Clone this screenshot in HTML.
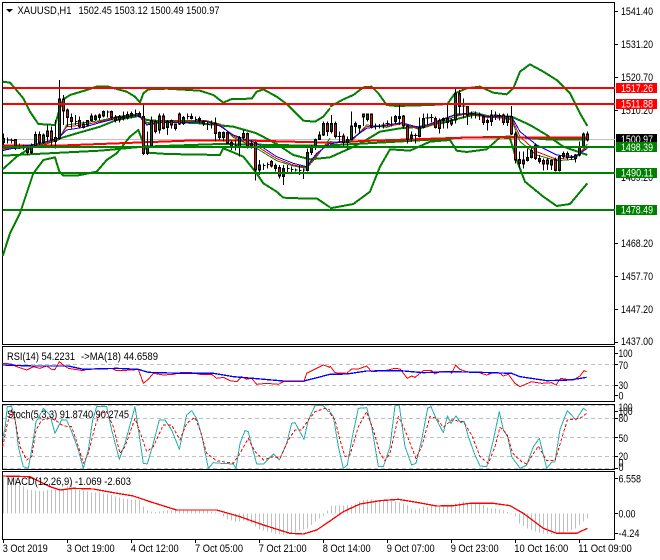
<!DOCTYPE html>
<html><head><meta charset="utf-8"><style>
html,body{margin:0;padding:0;background:#fff}
svg{display:block;font-family:"Liberation Sans",sans-serif;font-size:11px}
text{fill:#000}
.c path,.c polyline,.c use{fill:none}
</style></head><body>
<svg width="660" height="560" viewBox="0 0 660 560" xmlns="http://www.w3.org/2000/svg">
<defs>
<path id="r1" d="M46 421V437M118 406V425M154 396V417M190 300V330M202 333V349M214 355V362M238 365V377M250 375V379M334 338V349M346 355V359M418 343V347M430 353V457M466 367V392M490 351V382M514 365V372M526 375V382M538 345V369M574 353V352M598 358V359M610 368V369M646 373V397M682 401V427M742 403V437M766 431V507M814 488V495M838 505V525M982 373V392"/>
<path id="g1" d="M10 418V425M82 443V455M94 440V455M106 406V435M130 408V425M142 396V407M166 415V422M178 300V412M262 365V372M274 351V359M286 351V355M298 348V349M310 338V345M358 353V357M370 351V353M382 346V349M394 343V345M442 441V457M454 365V437M478 351V387M502 367V379M550 355V367M658 401V409M670 401V409M694 431V437M718 415V439M730 403V409M754 433V437M778 498V507M826 500V502M850 508V527M922 461V509M934 443V455M946 421V439M958 408V415M970 373V402"/>
<path id="r2" d="M16 373V407M40 411V425M100 345V348M124 345V375M220 351V375M232 381V415M316 358V379M328 365V382M364 363V369M388 283V317M412 323V342M460 353V365M472 365V365M520 348V365M544 353V399M556 405V477M568 481V487M616 438V472M628 478V482M640 485V489M652 483V489M676 481V509M712 463V469M772 405V417"/>
<path id="g2" d="M4 373V392M52 421V425M64 381V415M76 373V377M88 381V379M112 345V355M196 353V362M208 353V352M244 408V412M268 385V407M280 358V379M340 358V359M352 358V365M376 283V357M484 348V362M532 353V365M580 483V489M592 475V479M604 455V469M664 485V492M688 473V509M700 463V467M736 468V472M748 443V462M760 405V437"/>
</defs>
<rect x="2.5" y="2.500" width="612" height="342" fill="#fff" stroke="#000"/>
<path d="M3 139.500H615" stroke="#c0c0c0" fill="none" shape-rendering="crispEdges"/>

<g class="c" shape-rendering="crispEdges">
<!-- left half main -->
<g transform="scale(.33333)" stroke-linejoin="round">
<g stroke="#008000" stroke-width="6">
<polyline points="8,245 30,248 45,265 70,295 90,335 115,372 165,375 178,330 190,298 210,285 260,270 290,260 325,260 380,275 405,290 420,308 430,280 445,268 500,266 600,272 640,285 670,308 695,297 755,296 770,275 790,268 830,290 860,312 910,362 945,365 970,350 990,325"/>
<polyline points="8,768 30,700 60,640 100,520 130,480 165,472 178,515 190,527 230,527 290,515 320,480 350,460 390,410 415,390 430,430 445,458 500,462 660,465 670,445 695,455 730,470 770,520 790,550 830,575 850,593 900,595 950,595 990,622"/>
<polyline points="8,508 50,470 100,438 170,418 220,403 300,380 350,360 415,348 440,360 500,365 600,370 650,375 700,380 770,400 830,432 880,465 930,478 990,472"/>
<polyline points="8,467 300,452 430,440 660,432 990,438"/>
</g>
<polyline stroke="#f00" stroke-width="6" points="8,437 170,437 300,432 430,427 560,422 760,422 990,428"/>
<polyline stroke="#008000" stroke-width="3" points="8,445 60,445 120,438 175,420 200,375 250,368 300,362 350,350 415,342 440,368 480,362 550,362 620,362 660,372 700,412 770,445 830,482 880,498 920,505 950,470 990,415"/>
<polyline stroke="#f00" stroke-width="3" points="8,448 60,442 120,434 175,418 200,380 250,375 300,365 350,352 415,344 440,372 480,365 550,365 620,363 660,375 700,408 770,438 830,476 880,495 920,502 950,465 990,425"/>
<polyline stroke="#00f" stroke-width="3" points="8,452 60,440 120,430 175,415 200,390 250,382 300,368 350,355 415,345 440,375 480,368 550,368 620,365 660,378 700,405 770,430 830,470 880,490 920,500 950,460 990,430"/>
<path stroke="#000" stroke-width="3" d="M10 400V435M22 412V430M34 415V430M46 418V450M58 430V445M70 433V450M82 435V465M94 430V462M106 395V442M118 395V435M130 400V432M142 375V425M154 380V440M166 360V445M178 240V420M190 285V375M202 325V380M214 340V385M226 345V375M238 350V385M250 365V385M262 360V380M274 340V365M286 343V362M298 340V360M310 332V352M322 332V352M334 332V360M346 345V368M358 345V368M370 335V362M382 335V358M394 335V355M406 328V352M418 335V352M430 310V465M442 395V465M454 350V442M466 360V400M478 340V400M490 340V388M502 360V405M514 358V385M526 370V392M538 338V375M550 348V375M562 340V358M574 340V358M586 350V365M598 350V370M610 360V378M622 365V390M634 362V385M646 352V425M658 395V420M670 395V425M682 395V432M694 420V450M706 420V452M718 408V470M730 390V420M742 398V445M754 420V445M766 425V542M778 480V525M790 490V510M802 488V505M814 480V502M826 490V515M838 495V535M850 495V555M862 495V520M874 500V518M886 505V515M898 495V525M910 505V537M922 445V515M934 435V465M946 415V450M958 395V420M970 365V408M982 365V408"/>
<path stroke="#000" stroke-width="3" d="M22 420H34M34 421H44M226 365H232M322 336H328M406 340H412M562 350H568M586 358H592M622 373H628M634 371H640M706 437H712M790 496H796M802 494H808M862 506H868M874 508H880M886 510H892M898 512H904M910 510H916"/>
<use href="#r1" stroke="#000" stroke-width="9" stroke-linecap="square"/>
<use href="#g1" stroke="#000" stroke-width="9" stroke-linecap="square"/>
<use href="#r1" stroke="#f00" stroke-width="3"/>
<use href="#g1" stroke="#006400" stroke-width="3"/>
</g>
<!-- right half main -->
<g transform="translate(330 0) scale(.33333)" stroke-linejoin="round">
<g stroke="#008000" stroke-width="6">
<polyline points="0,320 40,298 70,285 100,262 125,260 145,280 170,315 200,318 300,315 352,312 375,280 410,265 450,260 490,278 530,283 550,265 570,215 600,193 640,215 680,240 720,280 750,340 772,378"/>
<polyline points="0,625 70,612 120,575 150,500 180,448 240,452 300,425 360,420 380,452 410,456 470,448 510,412 540,415 560,480 585,545 640,590 680,618 720,612 772,550"/>
<polyline points="0,472 60,445 100,425 150,395 210,385 270,380 340,368 400,352 430,345 490,350 545,350 600,375 650,405 700,440 772,465"/>
<polyline points="0,436 200,425 400,413 540,410 650,418 772,418"/>
</g>
<polyline stroke="#f00" stroke-width="6" points="0,428 100,423 250,418 400,413 772,413"/>
<polyline stroke="#008000" stroke-width="3" points="0,425 60,428 110,375 170,382 215,368 265,388 300,378 375,350 430,336 470,346 545,360 570,425 620,465 680,482 735,478 772,432"/>
<polyline stroke="#f00" stroke-width="3" points="0,428 60,425 110,380 170,378 215,372 265,385 300,375 375,345 430,343 470,352 545,355 570,410 620,455 680,478 735,470 772,440"/>
<polyline stroke="#00f" stroke-width="3" points="0,432 60,420 110,385 170,375 215,368 265,382 300,372 380,342 430,340 470,350 545,350 570,395 620,435 680,465 735,470 772,445"/>
<path stroke="#000" stroke-width="3" d="M4 345V400M16 365V415M28 395V425M40 400V440M52 410V450M64 335V420M76 365V400M88 375V400M100 350V378M112 340V365M124 340V385M136 370V388M148 372V385M160 368V385M172 362V380M184 350V380M196 345V372M208 315V375M220 345V385M232 375V430M244 395V425M256 400V430M268 352V412M280 340V385M292 340V375M304 342V368M316 350V385M328 355V400M340 352V385M352 310V385M364 355V378M376 265V370M388 270V345M400 295V355M412 320V375M424 335V355M436 335V355M448 338V360M460 345V375M472 355V392M484 330V378M496 335V360M508 340V362M520 340V375M532 340V378M544 318V405M556 395V490M568 455V505M580 455V505M592 445V485M604 440V475M616 430V480M628 465V490M640 475V512M652 475V510M664 478V510M676 472V515M688 465V515M700 455V475M712 455V478M724 465V480M736 462V488M748 425V470M760 398V442M772 395V425"/>
<path stroke="#000" stroke-width="3" d="M22 410H34M84 380H92M130 378H142M142 378H154M154 375H166M166 371H178M204 352H212M250 406H262M286 354H298M298 352H310M394 318H406M418 342H430M430 342H442M442 344H454M490 345H502M502 346H514M718 472H730"/>
<use href="#r2" stroke="#000" stroke-width="9" stroke-linecap="square"/>
<use href="#g2" stroke="#000" stroke-width="9" stroke-linecap="square"/>
<use href="#r2" stroke="#f00" stroke-width="3"/>
<use href="#g2" stroke="#006400" stroke-width="3"/>
</g>
</g>

<!-- horizontal lines -->
<g shape-rendering="crispEdges" fill="none" stroke-width="2">
<path d="M3 88H615M3 104H615" stroke="#f00"/>
<path d="M3 147H615M3 173H615M3 210H615" stroke="#008000"/>
</g>

<!-- panels -->
<g fill="#fff" stroke="#000" shape-rendering="crispEdges">
<rect x="2.5" y="346.500" width="612" height="55"/>
<rect x="2.5" y="404.500" width="612" height="65"/>
<rect x="2.5" y="471.500" width="612" height="68"/>
</g>
<g fill="none" stroke="#c0c0c0" stroke-dasharray="4 3" shape-rendering="crispEdges">
<path d="M3 364.500H614M3 385.500H614M3 405.500H614M3 418.500H614M3 437.500H614M3 456.500H614M3 468.500H614"/>
</g>

<g class="c" shape-rendering="crispEdges" stroke-linejoin="round" stroke-width="3">
<g transform="translate(0 340) scale(.33333)">
<polyline stroke="#f00" points="8,70 35,72 45,78 80,90 100,80 120,85 140,78 155,88 165,88 178,65 190,75 205,85 250,92 260,88 300,85 335,85 350,92 400,90 415,88 430,130 445,118 460,100 490,105 520,103 545,97 570,97 600,103 635,103 650,115 670,112 690,122 710,125 725,110 740,118 755,115 770,133 800,130 835,133 850,125 912,125 920,100 970,75 990,82"/>
<polyline stroke="#00f" stroke-width="4" points="8,75 100,78 205,78 250,88 350,85 415,88 445,97 540,100 640,100 700,110 770,116 850,123 912,123 990,103"/>
<path stroke="#c0c0c0" d="M10 520V408M22 520V408M34 520V410M46 520V415M58 520V420M70 520V440M82 520V448M94 520V450M106 520V452M118 520V453M130 520V453M142 520V450M154 520V448M166 520V450M178 520V450M190 520V445M202 520V438M214 520V430M226 520V445M238 520V450M250 520V452M262 520V455M274 520V458M286 520V458M298 520V458M310 520V460M322 520V462M334 520V465M346 520V470M358 520V472M370 520V475M382 520V477M394 520V478M406 520V478M418 520V480M430 520V500M442 520V512M454 520V514M466 520V516M478 520V514M490 520V513M502 520V512M514 520V512M526 520V510M538 520V510M550 520V510M562 520V510M574 520V510M586 520V510M598 520V510M610 520V511M622 520V512M634 520V514M646 520V518M658 520V522M670 520V530M682 520V538M694 520V542M706 520V546M718 520V545M730 520V542M742 520V545M754 520V550M766 520V560M778 520V568M790 520V572M802 520V575M814 520V578M826 520V580M838 520V582M850 520V585M862 520V582M874 520V580M886 520V578M898 520V572M910 520V568M922 520V565M934 520V555M946 520V545M958 520V535M970 520V528M982 520V512"/>
<polyline stroke="#20b2aa" points="8,295 15,265 22,200 35,200 45,235 55,320 70,380 85,385 95,330 108,245 115,235 130,205 150,225 165,280 185,240 200,240 215,275 235,330 250,385 265,330 278,240 290,200 320,200 335,270 358,358 375,310 405,200 430,370 442,372 460,310 478,240 495,240 515,270 538,328 560,225 575,212 590,235 605,285 625,385 640,368 665,370 700,372 708,385 720,310 735,272 745,275 760,335 770,372 790,372 820,342 838,360 860,310 875,250 885,248 912,298 925,240 945,197 970,197 985,215 990,215"/>
<polyline stroke="#f00" stroke-dasharray="9 6" points="8,320 22,250 35,210 45,240 60,320 80,360 95,350 108,270 125,240 150,235 165,240 190,258 215,260 235,320 250,370 265,340 285,260 300,220 320,215 340,260 360,340 375,320 405,235 425,290 440,335 460,320 490,255 515,255 540,300 560,250 585,232 600,270 620,340 650,362 700,370 720,340 745,295 765,335 790,360 820,350 840,355 865,300 885,270 905,270 925,240 945,215 975,205 990,210"/>
<polyline stroke="#f00" stroke-width="4" points="8,408 90,410 150,440 180,450 220,445 280,447 340,458 400,468 450,485 530,510 590,510 650,510 720,530 790,555 870,580 910,582 950,570 990,543"/>
</g>
<g transform="translate(330 340) scale(.33333)">
<polyline stroke="#f00" points="0,78 15,98 50,100 65,87 85,87 110,78 125,95 165,92 195,85 210,87 232,115 245,108 255,112 280,92 305,92 315,102 330,94 360,94 365,100 377,75 390,88 410,95 445,97 470,105 490,98 510,100 520,108 535,103 555,130 570,140 605,125 635,130 665,128 678,135 692,115 710,118 730,120 750,108 762,92 770,95"/>
<polyline stroke="#00f" stroke-width="4" points="0,103 50,102 110,93 210,92 280,98 360,95 450,97 545,100 570,110 650,122 720,120 770,112"/>
<path stroke="#c0c0c0" d="M4 520V498M16 520V497M28 520V497M40 520V497M52 520V497M64 520V495M76 520V490M88 520V485M100 520V480M112 520V478M124 520V477M136 520V480M148 520V482M160 520V482M172 520V483M184 520V483M196 520V485M208 520V487M220 520V490M232 520V495M244 520V505M256 520V508M268 520V505M280 520V500M292 520V500M304 520V498M316 520V497M328 520V497M340 520V497M352 520V495M364 520V493M376 520V490M388 520V487M400 520V484M412 520V487M424 520V490M436 520V490M448 520V490M460 520V495M472 520V503M484 520V505M496 520V505M508 520V508M520 520V512M532 520V516M544 520V522M556 520V530M568 520V550M580 520V558M592 520V565M604 520V570M616 520V575M628 520V578M640 520V580M652 520V582M664 520V582M676 520V580M688 520V578M700 520V578M712 520V575M724 520V570M736 520V565M748 520V555M760 520V545M772 520V535"/>
<polyline stroke="#20b2aa" points="0,215 10,230 25,320 40,385 52,375 65,300 85,205 110,203 125,260 145,380 160,380 180,320 195,197 208,197 225,320 245,375 258,370 275,300 293,205 303,200 320,240 340,278 352,228 363,250 378,228 392,248 403,245 415,290 435,345 450,378 470,380 490,300 508,215 520,270 533,290 545,350 570,385 590,375 610,320 628,295 650,385 665,367 675,365 690,268 712,212 738,240 760,205 770,212"/>
<polyline stroke="#f00" stroke-dasharray="9 6" points="0,220 15,240 30,300 45,350 60,345 85,260 110,215 130,270 150,340 165,362 180,340 205,230 225,270 258,355 275,320 300,230 320,235 340,262 365,240 400,245 425,285 450,350 475,370 495,320 510,262 530,280 548,340 575,365 590,372 625,318 650,362 675,362 712,240 750,235 770,220"/>
<polyline stroke="#f00" stroke-width="4" points="0,543 40,515 90,492 150,482 205,478 260,487 320,498 370,497 420,490 490,490 540,497 580,520 640,565 680,580 740,580 772,565"/>
</g>
</g>

<!-- ticks -->
<path shape-rendering="crispEdges" stroke="#000" fill="none" d="M615 11.500h3M615 44.500h3M615 77.500h3M615 110.500h3M615 243.500h3M615 276.500h3M615 309.500h3M615 342.500h3M615 353.500h3M615 364.500h3M615 385.500h3M615 395.500h3M615 411.500h3M615 418.500h3M615 437.500h3M615 456.500h3M615 468.500h3M615 478.500h3M615 513.500h3M615 533.500h3M3.500 539v4M67.500 539v4M131.500 539v4M195.500 539v4M259.500 539v4M323.500 539v4M387.500 539v4M451.500 539v4M515.500 539v4M579.500 539v4"/>
<path d="M6 9h7l-3.500 3.500z" fill="#000"/>

<!-- text -->
<text x="17.500" y="14" textLength="54" lengthAdjust="spacingAndGlyphs">XAUUSD,H1</text>
<text x="78.500" y="14" textLength="141" lengthAdjust="spacingAndGlyphs">1502.45 1503.12 1500.49 1500.97</text>
<g>
<text x="621" y="15" textLength="32" lengthAdjust="spacingAndGlyphs">1541.40</text><text x="621" y="48" textLength="32" lengthAdjust="spacingAndGlyphs">1531.20</text><text x="621" y="81" textLength="32" lengthAdjust="spacingAndGlyphs">1520.70</text><text x="621" y="114" textLength="32" lengthAdjust="spacingAndGlyphs">1510.20</text><text x="621" y="181" textLength="32" lengthAdjust="spacingAndGlyphs">1489.20</text><text x="621" y="247" textLength="32" lengthAdjust="spacingAndGlyphs">1468.20</text><text x="621" y="280" textLength="32" lengthAdjust="spacingAndGlyphs">1457.70</text><text x="621" y="313" textLength="32" lengthAdjust="spacingAndGlyphs">1447.20</text><text x="621" y="345" textLength="32" lengthAdjust="spacingAndGlyphs">1437.00</text>
<text x="618.500" y="357" textLength="14" lengthAdjust="spacingAndGlyphs">100</text><text x="618.500" y="369" textLength="9.500" lengthAdjust="spacingAndGlyphs">70</text><text x="618.500" y="389" textLength="9.500" lengthAdjust="spacingAndGlyphs">30</text><text x="618.500" y="399.500" textLength="5" lengthAdjust="spacingAndGlyphs">0</text>
<text x="618.500" y="411" textLength="14" lengthAdjust="spacingAndGlyphs">100</text><text x="618.500" y="415" textLength="14" lengthAdjust="spacingAndGlyphs">100</text><text x="618.500" y="422" textLength="9.500" lengthAdjust="spacingAndGlyphs">80</text><text x="618.500" y="442" textLength="9.500" lengthAdjust="spacingAndGlyphs">50</text><text x="618.500" y="460" textLength="9.500" lengthAdjust="spacingAndGlyphs">20</text><text x="618.500" y="466.500" textLength="5" lengthAdjust="spacingAndGlyphs">0</text><text x="618.500" y="471" textLength="5" lengthAdjust="spacingAndGlyphs">0</text>
<text x="618.500" y="482.500" textLength="22.500" lengthAdjust="spacingAndGlyphs">6.558</text><text x="618.500" y="517.500" textLength="17" lengthAdjust="spacingAndGlyphs">0.00</text><text x="618.500" y="537" textLength="21" lengthAdjust="spacingAndGlyphs">-4.24</text>
</g>
<g shape-rendering="crispEdges">
<rect x="616" y="83" width="41" height="10" fill="#f00"/><rect x="616" y="99" width="41" height="10" fill="#f00"/>
<rect x="616" y="134" width="41" height="9" fill="#000"/>
</g>
<text x="621" y="92" textLength="32" lengthAdjust="spacingAndGlyphs" style="fill:#fff">1517.26</text><text x="621" y="107.500" textLength="32" lengthAdjust="spacingAndGlyphs" style="fill:#fff">1511.88</text>
<text x="621" y="143" textLength="32" lengthAdjust="spacingAndGlyphs" style="fill:#fff">1500.97</text>
<g shape-rendering="crispEdges">
<rect x="616" y="142" width="41" height="10" fill="#008000"/><rect x="616" y="168" width="41" height="10" fill="#008000"/><rect x="616" y="205" width="41" height="10" fill="#008000"/>
</g>
<text x="621" y="151" textLength="32" lengthAdjust="spacingAndGlyphs" style="fill:#fff">1498.39</text><text x="621" y="176.500" textLength="32" lengthAdjust="spacingAndGlyphs" style="fill:#fff">1490.11</text><text x="621" y="213.500" textLength="32" lengthAdjust="spacingAndGlyphs" style="fill:#fff">1478.49</text>
<text x="7" y="360" textLength="68" lengthAdjust="spacingAndGlyphs">RSI(14) 54.2231</text>
<text x="81" y="360" textLength="77" lengthAdjust="spacingAndGlyphs">-&gt;MA(18) 44.6589</text>
<text x="7" y="418" textLength="122" lengthAdjust="spacingAndGlyphs">Stoch(5,3,3) 91.8740 90.2745</text>
<text x="7" y="485" textLength="124" lengthAdjust="spacingAndGlyphs">MACD(12,26,9) -1.069 -2.603</text>
<g>
<text x="2.700" y="552" textLength="45" lengthAdjust="spacingAndGlyphs">3 Oct 2019</text><text x="66.700" y="552" textLength="48" lengthAdjust="spacingAndGlyphs">3 Oct 19:00</text><text x="130.700" y="552" textLength="48" lengthAdjust="spacingAndGlyphs">4 Oct 12:00</text><text x="195" y="552" textLength="48" lengthAdjust="spacingAndGlyphs">7 Oct 05:00</text><text x="258.700" y="552" textLength="48" lengthAdjust="spacingAndGlyphs">7 Oct 21:00</text><text x="322.700" y="552" textLength="48" lengthAdjust="spacingAndGlyphs">8 Oct 14:00</text><text x="386.700" y="552" textLength="48" lengthAdjust="spacingAndGlyphs">9 Oct 07:00</text><text x="450.700" y="552" textLength="48" lengthAdjust="spacingAndGlyphs">9 Oct 23:00</text><text x="514.300" y="552" textLength="54" lengthAdjust="spacingAndGlyphs">10 Oct 16:00</text><text x="578.300" y="552" textLength="53.500" lengthAdjust="spacingAndGlyphs">11 Oct 09:00</text>
</g>
</svg>
</body></html>
